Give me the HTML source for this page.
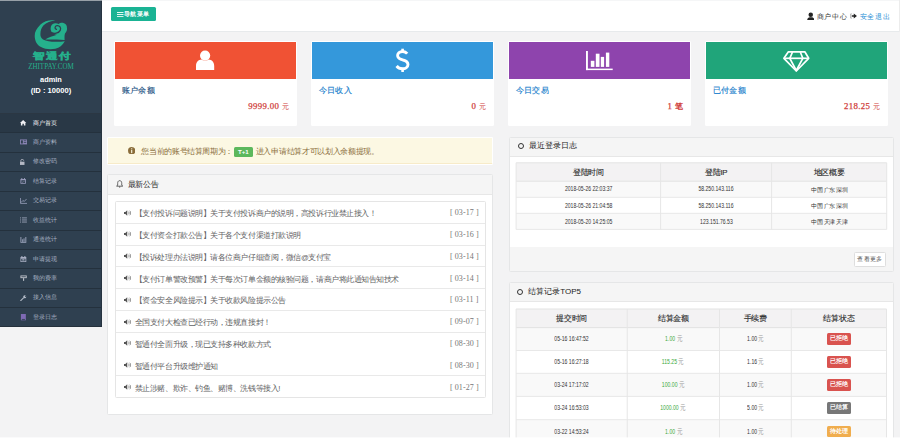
<!DOCTYPE html><html><head><meta charset="utf-8"><style>
*{margin:0;padding:0;box-sizing:border-box}
html,body{width:900px;height:438px;overflow:hidden;background:#f3f3f4;font-family:"Liberation Sans",sans-serif;color:#676a6c}
.a{position:absolute;white-space:nowrap}
.menu{left:0;width:101px;border-top:1px solid #24313d;font-size:5.9px}
.card{width:183px;height:85px;background:#fff;border-radius:1.5px;top:40.75px}
.band{position:absolute;left:1px;top:1px;right:1px;height:37px}
.tt{position:absolute;left:8.2px;top:45.7px;font-size:8px;letter-spacing:0.2px;line-height:10px;font-weight:500;-webkit-text-stroke:0.15px currentColor}
.amt{position:absolute;right:8px;top:60px;font-family:"Liberation Serif",serif;font-size:8.8px;letter-spacing:0.35px;line-height:10px;color:#d0403b;-webkit-text-stroke:0.25px #d0403b}
.amt i{font-style:normal;font-weight:normal;font-size:7.4px;letter-spacing:0;-webkit-text-stroke:0}
.panel{background:#fff;border:1px solid #e5e6e7;border-radius:1.5px;overflow:hidden}
.ph{position:absolute;left:0;top:0;width:100%;background:#f5f5f5;border-bottom:1px solid #e7e7e7}
.nx{display:inline-block;transform:scaleX(0.8);transform-origin:50% 50%}
.ptitle{color:#222;line-height:10px;font-weight:500}
</style></head><body>
<div class="a" style="left:0;top:0;width:102px;height:327px;background:#2f4050;border-right:1px solid #263340;border-bottom:1px solid #25313c">
<svg class="a" style="left:0;top:0" width="102" height="100" viewBox="0 0 102 100">
<path fill="#25b08c" d="M55.3,20.5 C50,19.6 44,21 40.5,24.5 C36.5,28.5 34.6,32 34.7,36 C34.8,41 37,45 41,47 C45,49.2 50,49.6 55.3,48.8 C59.5,48 62.5,45 64.8,41.2 C61.5,41.8 58.5,41.9 55.3,41.8 C51,41.8 46,41.2 43,39.5 C41,38 40.3,36 40.4,34 C40.5,30 41.6,27.2 43.6,25.2 C46.2,22.6 51,21 55.3,20.5 Z"/>
<path fill="#25b08c" d="M50.6,28.6 C50.6,25.5 52.5,23.5 55,23.3 C56.5,23.2 57.8,23.5 58.6,24 C59.8,22.8 61.8,22.4 63.5,22.9 C65.8,23.6 67.2,25.4 66.9,27.6 C67.4,29.5 66.8,31.8 65,33.5 C64.3,35.5 64.6,38 64.6,40.1 C58,39.6 51,39.5 45.2,39.6 C48.5,37.5 53,35.8 57,34.8 C53,34.5 50.6,32 50.6,28.6 Z"/>
<path fill="none" stroke="#2f4050" stroke-width="1.3" stroke-linecap="round" d="M51.5,32.6 C54,34 58.6,33.6 60.2,30.4 C61.4,27.8 59.6,25.3 57,25.6 C54.8,25.9 54.3,28.6 56.4,29.4"/>
</svg>
<div class="a" style="left:0;width:102px;text-align:center;top:49.5px;font-size:11px;line-height:13px;font-weight:bold;color:#25b08c;letter-spacing:2px;text-indent:2px;-webkit-text-stroke:0.6px #25b08c;transform:scaleY(0.78)">智通付</div>
<div class="a" style="left:0;width:102px;text-align:center;top:62.8px;font-family:'Liberation Serif',serif;font-size:8.2px;line-height:7px;color:#25b08c;transform:scaleX(0.86)">ZHITPAY.COM</div>
<div class="a" style="left:0;width:102px;text-align:center;top:75.5px;font-size:7.4px;line-height:8px;font-weight:bold;color:#fff">admin</div>
<div class="a" style="left:0;width:102px;text-align:center;top:86.5px;font-size:7.6px;line-height:8px;font-weight:bold;color:#fff">(ID : 10000)</div>
<div class="a menu" style="top:113.10px;height:19.10px;background:#293846;border-top-color:#2b3743;color:#ffffff">
<svg class="a" style="left:20.3px;top:6px;color:#f0f0f4" width="7.2" height="6.3" viewBox="0 0 8 7" fill="#f0f0f4"><path d="M0,3.2 L3.5,0 L7,3.2 L6,3.2 L6,6 L4.3,6 L4.3,4.2 L2.7,4.2 L2.7,6 L1,6 L1,3.2 Z"/></svg>
<div class="a" style="left:33px;top:5.5px;line-height:7px">商户首页</div>
</div>
<div class="a menu" style="top:132.20px;height:19.47px;color:#a7b1c2">
<svg class="a" style="left:20.3px;top:6px;color:#8a84b4" width="7.2" height="6.3" viewBox="0 0 8 7" fill="#8a84b4"><rect x="0" y="0.5" width="8" height="5.5"/><rect x="1" y="1.5" width="2.2" height="3.5" fill="#2f4050"/><rect x="4.2" y="1.6" width="2.8" height="0.8" fill="#2f4050"/><rect x="4.2" y="3.4" width="2.8" height="0.8" fill="#2f4050"/></svg>
<div class="a" style="left:33px;top:5.5px;line-height:7px">商户资料</div>
</div>
<div class="a menu" style="top:151.67px;height:19.47px;color:#a7b1c2">
<svg class="a" style="left:20.3px;top:6px;color:#b4b8c4" width="7.2" height="6.3" viewBox="0 0 8 7" fill="#b4b8c4"><rect x="0" y="3" width="5" height="3.6"/><path d="M1,3 L1,1.6 C1,0 4,0 4,1.6 L4,2" fill="none" stroke-width="1" stroke="currentColor"/></svg>
<div class="a" style="left:33px;top:5.5px;line-height:7px">修改密码</div>
</div>
<div class="a menu" style="top:171.14px;height:19.47px;color:#a7b1c2">
<svg class="a" style="left:20.3px;top:6px;color:#9a9cbc" width="7.2" height="6.3" viewBox="0 0 8 7" fill="#9a9cbc"><path d="M0.5,1 L6.5,1 L6.5,6.5 L0.5,6.5 Z M1.5,2.6 L1.5,5.6 L5.5,5.6 L5.5,2.6 Z"/><rect x="1.5" y="0" width="1" height="1.6"/><rect x="4.5" y="0" width="1" height="1.6"/><path d="M2.3,4.2 L3.3,5 L4.8,3.3" fill="none" stroke="currentColor" stroke-width="0.6"/></svg>
<div class="a" style="left:33px;top:5.5px;line-height:7px">结算记录</div>
</div>
<div class="a menu" style="top:190.61px;height:19.47px;color:#a7b1c2">
<svg class="a" style="left:20.3px;top:6px;color:#9aa0bc" width="7.2" height="6.3" viewBox="0 0 8 7" fill="#9aa0bc"><path d="M0.5,0 L0.5,6 L8,6" fill="none" stroke="currentColor" stroke-width="0.9"/><path d="M1.2,5 L3.2,2.8 L4.8,3.8 L7.4,1" fill="none" stroke="currentColor" stroke-width="0.9"/></svg>
<div class="a" style="left:33px;top:5.5px;line-height:7px">交易记录</div>
</div>
<div class="a menu" style="top:210.08px;height:19.47px;color:#a7b1c2">
<svg class="a" style="left:20.3px;top:6px;color:#9aa2b8" width="7.2" height="6.3" viewBox="0 0 8 7" fill="#9aa2b8"><rect x="0" y="0.5" width="1.2" height="1"/><rect x="0" y="2.8" width="1.2" height="1"/><rect x="0" y="5.1" width="1.2" height="1"/><rect x="2.2" y="0.5" width="5.5" height="1"/><rect x="2.2" y="2.8" width="5.5" height="1"/><rect x="2.2" y="5.1" width="5.5" height="1"/></svg>
<div class="a" style="left:33px;top:5.5px;line-height:7px">收益统计</div>
</div>
<div class="a menu" style="top:229.55px;height:19.47px;color:#a7b1c2">
<svg class="a" style="left:20.3px;top:6px;color:#a0a8c0" width="7.2" height="6.3" viewBox="0 0 8 7" fill="#a0a8c0"><path d="M0.5,0 L0.5,6.5 L7,6.5 L7,0 L6,0 L6,5.5 L1.5,5.5 L1.5,0 Z"/><rect x="2.5" y="2.5" width="1" height="3"/><rect x="4" y="1.5" width="1" height="4"/></svg>
<div class="a" style="left:33px;top:5.5px;line-height:7px">通道统计</div>
</div>
<div class="a menu" style="top:249.02px;height:19.47px;color:#a7b1c2">
<svg class="a" style="left:20.3px;top:6px;color:#aab0c4" width="7.2" height="6.3" viewBox="0 0 8 7" fill="#aab0c4"><path d="M0.5,1.2 L7,1.2 L7,6.6 L0.5,6.6 Z M1.4,3 L1.4,5.7 L6.1,5.7 L6.1,3 Z"/><rect x="1.5" y="0" width="1.2" height="2"/><rect x="4.8" y="0" width="1.2" height="2"/><rect x="2.5" y="3.6" width="2.5" height="1.4"/></svg>
<div class="a" style="left:33px;top:5.5px;line-height:7px">申请提现</div>
</div>
<div class="a menu" style="top:268.49px;height:19.47px;color:#a7b1c2">
<svg class="a" style="left:20.3px;top:6px;color:#c0c4cc" width="7.2" height="6.3" viewBox="0 0 8 7" fill="#c0c4cc"><rect x="0.5" y="0.5" width="7" height="3"/><rect x="3.4" y="3.5" width="1.2" height="3"/><rect x="1.5" y="1.5" width="5" height="1" fill="#2f4050"/></svg>
<div class="a" style="left:33px;top:5.5px;line-height:7px">我的费率</div>
</div>
<div class="a menu" style="top:287.96px;height:19.47px;color:#a7b1c2">
<svg class="a" style="left:20.3px;top:6px;color:#b4bcc8" width="7.2" height="6.3" viewBox="0 0 8 7" fill="#b4bcc8"><path d="M0.5,6.6 L4.2,2.9" fill="none" stroke="currentColor" stroke-width="1.2"/><circle cx="5.3" cy="1.9" r="1.7"/><rect x="5.2" y="0" width="1.3" height="1.6" fill="#2f4050" transform="rotate(45 5.3 1.9)"/></svg>
<div class="a" style="left:33px;top:5.5px;line-height:7px">接入信息</div>
</div>
<div class="a menu" style="top:307.43px;height:19.57px;color:#a7b1c2">
<svg class="a" style="left:20.3px;top:6px;color:#7e6ab4" width="7.2" height="6.3" viewBox="0 0 8 7" fill="#7e6ab4"><rect x="1" y="0" width="5.5" height="7"/><rect x="2" y="5.5" width="3.5" height="1" fill="#2f4050"/></svg>
<div class="a" style="left:33px;top:5.5px;line-height:7px">登录日志</div>
</div>
</div>
<div class="a" style="left:102px;top:0;width:798px;height:32px;background:#fff;border-bottom:1px solid #e7eaec"></div>
<div class="a" style="left:0;top:0;width:900px;height:1px;background:rgba(236,238,240,0.55);z-index:9"></div>
<div class="a" style="left:111.2px;top:6.9px;width:44.8px;height:14.1px;background:#1ab394;border-radius:1.5px"></div>
<svg class="a" style="left:117px;top:11.8px" width="6.5" height="5.2" viewBox="0 0 6.5 5.2" fill="#fff"><rect x="0" y="0" width="6.5" height="0.9"/><rect x="0" y="2.1" width="6.5" height="0.9"/><rect x="0" y="4.2" width="6.5" height="0.9"/></svg>
<div class="a" style="left:124.2px;top:9.8px;font-size:6.3px;letter-spacing:0.300px;line-height:8px;color:#fff;font-weight:bold">导航菜单</div>
<svg class="a" style="left:806.5px;top:11.5px" width="7.5" height="8.5" viewBox="0 0 8 9"><circle cx="4" cy="2.8" r="2.4" fill="#222"/><path d="M0.2,8.4 C0.4,6.4 1.6,5.6 3,5.5 L5,5.5 C6.4,5.6 7.6,6.4 7.8,8.4 Z" fill="#222"/></svg>
<div class="a" style="left:816.8px;top:12.7px;font-size:7px;letter-spacing:0.600px;line-height:8px;color:#333;font-weight:500">商户中心</div>
<svg class="a" style="left:850.3px;top:12px" width="7.5" height="8" viewBox="0 0 8 8"><path d="M2.2,1.8 L0.6,1.8 L0.6,6.2 L2.2,6.2" fill="none" stroke="#999" stroke-width="0.7"/><path d="M1.8,3.1 L4,3.1 L4,1.4 L7.4,4 L4,6.6 L4,4.9 L1.8,4.9 Z" fill="#222"/></svg>
<div class="a" style="left:859.5px;top:12.7px;font-size:7px;letter-spacing:0.800px;line-height:8px;color:#2b8fd6;font-weight:500">安全退出</div>
<div class="a card" style="left:113.90px"><div class="band" style="background:#f05234"></div>
<div class="tt" style="color:#1b5283">账户余额</div><div class="amt">9999.00 <i>元</i></div></div>
<div class="a card" style="left:310.90px"><div class="band" style="background:#3498db"></div>
<div class="tt" style="color:#1a80cc">今日收入</div><div class="amt">0 <i>元</i></div></div>
<div class="a card" style="left:507.90px"><div class="band" style="background:#8e44ad"></div>
<div class="tt" style="color:#1a80cc">今日交易</div><div class="amt">1 <i style="font-weight:bold;font-size:8px">笔</i></div></div>
<div class="a card" style="left:704.90px"><div class="band" style="background:#20a57a"></div>
<div class="tt" style="color:#1a80cc">已付金额</div><div class="amt">218.25 <i>元</i></div></div>
<svg class="a" style="left:0;top:0;z-index:2" width="900" height="100" viewBox="0 0 900 100">
<circle cx="205.1" cy="55.6" r="5.1" fill="#fff"/>
<path fill="#fff" d="M196,70.1 L196,66 C196,62.2 198.5,59.8 201.5,59.6 C203,61 207.2,61 208.7,59.6 C211.7,59.8 214.2,62.2 214.2,66 L214.2,70.1 Z"/>
<path fill="none" stroke="#fff" stroke-width="2.9" d="M407.2,53.6 C405.5,51.5 402.5,51.3 400.5,51.9 C398,52.7 397.3,55 397.8,56.7 C398.5,59 401.5,59.6 403,60 C405.5,60.6 408,61.6 408,64.6 C408,67.5 405,69 402.3,68.8 C399.8,68.7 397.8,67.5 396.6,66"/>
<rect x="401.3" y="48.7" width="2.6" height="4" fill="#fff"/>
<rect x="401.3" y="67.8" width="2.6" height="4.2" fill="#fff"/>
<rect x="586" y="51" width="1.9" height="19.1" fill="#fff"/>
<rect x="586" y="68.6" width="26.7" height="1.5" fill="#fff"/>
<rect x="590.8" y="60.8" width="3.6" height="6.1" fill="#fff"/>
<rect x="595.8" y="53.7" width="3.7" height="13.2" fill="#fff"/>
<rect x="600.8" y="56.9" width="3.3" height="10" fill="#fff"/>
<rect x="605.9" y="52.6" width="3.4" height="14.3" fill="#fff"/>
<g fill="none" stroke="#fff" stroke-width="1.7" stroke-linejoin="round">
<path d="M788.4,51.8 L804.8,51.8 L808.7,58.3 L796.3,71 L783.9,58.3 Z"/>
<path d="M784.2,58.3 L808.4,58.3"/>
<path d="M792.5,52 L789.8,58.3 L796.3,70.5 L802.8,58.3 L800.3,52"/>
</g>
</svg>
<div class="a" style="left:107px;top:136.5px;width:386.2px;height:27.4px;background:#fcf8e3;border:1px solid #fff;border-bottom-color:#f7ebc9;box-shadow:0 1px 0 #fff;border-radius:1.5px"></div>
<svg class="a" style="left:128px;top:146.7px" width="7.4" height="7.4" viewBox="0 0 8 8"><circle cx="4" cy="4" r="4" fill="#8a6d3b"/><rect x="3.4" y="1.4" width="1.2" height="1.1" fill="#fcf8e3"/><rect x="3.4" y="3.2" width="1.2" height="3.4" fill="#fcf8e3"/></svg>
<div class="a" style="left:141.3px;top:146.5px;font-size:7.6px;letter-spacing:-0.350px;line-height:9px;color:#8a6d3b">您当前的账号结算周期为：</div>
<div class="a" style="left:233.9px;top:146.9px;width:18.9px;height:9.8px;background:#5cb85c;border-radius:1.5px;color:#fff;font-size:6.2px;line-height:9.8px;text-align:center;font-weight:bold">T+1</div>
<div class="a" style="left:255.8px;top:146.5px;font-size:7.6px;letter-spacing:-0.310px;line-height:9px;color:#8a6d3b">进入申请结算才可以划入余额提现。</div>
<div class="a panel" style="left:107px;top:174.4px;width:386.2px;height:240.6px"><div class="ph" style="height:19.2px"></div></div>
<svg class="a" style="left:115.8px;top:180.4px" width="7.4" height="7.6" viewBox="0 0 8 8"><path d="M4,0.6 C5.8,0.6 6.2,2.2 6.2,3.6 L6.2,5.4 L7.4,6.6 L0.6,6.6 L1.8,5.4 L1.8,3.6 C1.8,2.2 2.2,0.6 4,0.6 Z" fill="none" stroke="#333" stroke-width="0.8"/><circle cx="4" cy="7.4" r="0.6" fill="#333"/></svg>
<div class="a ptitle" style="left:127.6px;top:179.5px;font-size:8px;letter-spacing:-0.100px">最新公告</div>
<div class="a" style="left:115px;top:201.0px;width:370.9px;height:196.69px;border:1px solid #e5e5e5;border-radius:1.5px;background:#fff"></div>
<svg class="a" style="left:123.6px;top:209.60px" width="7.6" height="6" viewBox="0 0 8 6"><path d="M0,2 L1.4,2 L3.4,0.2 L3.4,5.8 L1.4,4 L0,4 Z" fill="#555"/><path d="M4.6,1.6 C5.6,2.3 5.6,3.7 4.6,4.4 M5.8,0.6 C7.6,1.8 7.6,4.2 5.8,5.4" fill="none" stroke="#555" stroke-width="0.7"/></svg>
<div class="a" style="left:134.8px;top:209.20px;font-size:7.7px;letter-spacing:-0.450px;line-height:9px;color:#5f6264;font-weight:500">【支付投诉问题说明】关于支付投诉商户的说明，高投诉行业禁止接入！</div>
<div class="a" style="left:449.9px;top:208.10px;font-family:Liberation Serif,serif;font-size:8px;letter-spacing:0.1px;line-height:9px;color:#777">[ 03-17 ]</div>
<div class="a" style="left:115.5px;top:222.81px;width:369.5px;height:1px;background:#e9e9e9"></div>
<svg class="a" style="left:123.6px;top:231.41px" width="7.6" height="6" viewBox="0 0 8 6"><path d="M0,2 L1.4,2 L3.4,0.2 L3.4,5.8 L1.4,4 L0,4 Z" fill="#555"/><path d="M4.6,1.6 C5.6,2.3 5.6,3.7 4.6,4.4 M5.8,0.6 C7.6,1.8 7.6,4.2 5.8,5.4" fill="none" stroke="#555" stroke-width="0.7"/></svg>
<div class="a" style="left:134.8px;top:231.01px;font-size:7.7px;letter-spacing:-0.450px;line-height:9px;color:#5f6264;font-weight:500">【支付资金打款公告】关于各个支付渠道打款说明</div>
<div class="a" style="left:449.9px;top:229.91px;font-family:Liberation Serif,serif;font-size:8px;letter-spacing:0.1px;line-height:9px;color:#777">[ 03-16 ]</div>
<div class="a" style="left:115.5px;top:244.62px;width:369.5px;height:1px;background:#e9e9e9"></div>
<svg class="a" style="left:123.6px;top:253.22px" width="7.6" height="6" viewBox="0 0 8 6"><path d="M0,2 L1.4,2 L3.4,0.2 L3.4,5.8 L1.4,4 L0,4 Z" fill="#555"/><path d="M4.6,1.6 C5.6,2.3 5.6,3.7 4.6,4.4 M5.8,0.6 C7.6,1.8 7.6,4.2 5.8,5.4" fill="none" stroke="#555" stroke-width="0.7"/></svg>
<div class="a" style="left:134.8px;top:252.82px;font-size:7.7px;letter-spacing:-0.450px;line-height:9px;color:#5f6264;font-weight:500">【投诉处理办法说明】请各位商户仔细查阅，微信@支付宝</div>
<div class="a" style="left:449.9px;top:251.72px;font-family:Liberation Serif,serif;font-size:8px;letter-spacing:0.1px;line-height:9px;color:#777">[ 03-14 ]</div>
<div class="a" style="left:115.5px;top:266.43px;width:369.5px;height:1px;background:#e9e9e9"></div>
<svg class="a" style="left:123.6px;top:275.03px" width="7.6" height="6" viewBox="0 0 8 6"><path d="M0,2 L1.4,2 L3.4,0.2 L3.4,5.8 L1.4,4 L0,4 Z" fill="#555"/><path d="M4.6,1.6 C5.6,2.3 5.6,3.7 4.6,4.4 M5.8,0.6 C7.6,1.8 7.6,4.2 5.8,5.4" fill="none" stroke="#555" stroke-width="0.7"/></svg>
<div class="a" style="left:134.8px;top:274.63px;font-size:7.7px;letter-spacing:-0.450px;line-height:9px;color:#5f6264;font-weight:500">【支付订单警改预警】关于每次订单金额的核验问题，请商户将此通知告知技术</div>
<div class="a" style="left:449.9px;top:273.53px;font-family:Liberation Serif,serif;font-size:8px;letter-spacing:0.1px;line-height:9px;color:#777">[ 03-14 ]</div>
<div class="a" style="left:115.5px;top:288.24px;width:369.5px;height:1px;background:#e9e9e9"></div>
<svg class="a" style="left:123.6px;top:296.84px" width="7.6" height="6" viewBox="0 0 8 6"><path d="M0,2 L1.4,2 L3.4,0.2 L3.4,5.8 L1.4,4 L0,4 Z" fill="#555"/><path d="M4.6,1.6 C5.6,2.3 5.6,3.7 4.6,4.4 M5.8,0.6 C7.6,1.8 7.6,4.2 5.8,5.4" fill="none" stroke="#555" stroke-width="0.7"/></svg>
<div class="a" style="left:134.8px;top:296.44px;font-size:7.7px;letter-spacing:-0.450px;line-height:9px;color:#5f6264;font-weight:500">【资金安全风险提示】关于收款风险提示公告</div>
<div class="a" style="left:449.9px;top:295.34px;font-family:Liberation Serif,serif;font-size:8px;letter-spacing:0.1px;line-height:9px;color:#777">[ 03-11 ]</div>
<div class="a" style="left:115.5px;top:310.05px;width:369.5px;height:1px;background:#e9e9e9"></div>
<svg class="a" style="left:123.6px;top:318.65px" width="7.6" height="6" viewBox="0 0 8 6"><path d="M0,2 L1.4,2 L3.4,0.2 L3.4,5.8 L1.4,4 L0,4 Z" fill="#555"/><path d="M4.6,1.6 C5.6,2.3 5.6,3.7 4.6,4.4 M5.8,0.6 C7.6,1.8 7.6,4.2 5.8,5.4" fill="none" stroke="#555" stroke-width="0.7"/></svg>
<div class="a" style="left:134.8px;top:318.25px;font-size:7.7px;letter-spacing:-0.450px;line-height:9px;color:#5f6264;font-weight:500">全国支付大检查已经行动，违规直接封！</div>
<div class="a" style="left:449.9px;top:317.15px;font-family:Liberation Serif,serif;font-size:8px;letter-spacing:0.1px;line-height:9px;color:#777">[ 09-07 ]</div>
<div class="a" style="left:115.5px;top:331.86px;width:369.5px;height:1px;background:#e9e9e9"></div>
<svg class="a" style="left:123.6px;top:340.46px" width="7.6" height="6" viewBox="0 0 8 6"><path d="M0,2 L1.4,2 L3.4,0.2 L3.4,5.8 L1.4,4 L0,4 Z" fill="#555"/><path d="M4.6,1.6 C5.6,2.3 5.6,3.7 4.6,4.4 M5.8,0.6 C7.6,1.8 7.6,4.2 5.8,5.4" fill="none" stroke="#555" stroke-width="0.7"/></svg>
<div class="a" style="left:134.8px;top:340.06px;font-size:7.7px;letter-spacing:-0.450px;line-height:9px;color:#5f6264;font-weight:500">智通付全面升级，现已支持多种收款方式</div>
<div class="a" style="left:449.9px;top:338.96px;font-family:Liberation Serif,serif;font-size:8px;letter-spacing:0.1px;line-height:9px;color:#777">[ 08-30 ]</div>
<svg class="a" style="left:123.6px;top:362.27px" width="7.6" height="6" viewBox="0 0 8 6"><path d="M0,2 L1.4,2 L3.4,0.2 L3.4,5.8 L1.4,4 L0,4 Z" fill="#555"/><path d="M4.6,1.6 C5.6,2.3 5.6,3.7 4.6,4.4 M5.8,0.6 C7.6,1.8 7.6,4.2 5.8,5.4" fill="none" stroke="#555" stroke-width="0.7"/></svg>
<div class="a" style="left:134.8px;top:361.87px;font-size:7.7px;letter-spacing:-0.450px;line-height:9px;color:#5f6264;font-weight:500">智通付平台升级维护通知</div>
<div class="a" style="left:449.9px;top:360.77px;font-family:Liberation Serif,serif;font-size:8px;letter-spacing:0.1px;line-height:9px;color:#777">[ 08-30 ]</div>
<div class="a" style="left:115.5px;top:375.48px;width:369.5px;height:1px;background:#e9e9e9"></div>
<svg class="a" style="left:123.6px;top:384.08px" width="7.6" height="6" viewBox="0 0 8 6"><path d="M0,2 L1.4,2 L3.4,0.2 L3.4,5.8 L1.4,4 L0,4 Z" fill="#555"/><path d="M4.6,1.6 C5.6,2.3 5.6,3.7 4.6,4.4 M5.8,0.6 C7.6,1.8 7.6,4.2 5.8,5.4" fill="none" stroke="#555" stroke-width="0.7"/></svg>
<div class="a" style="left:134.8px;top:383.68px;font-size:7.7px;letter-spacing:-0.450px;line-height:9px;color:#5f6264;font-weight:500">禁止涉赌、欺诈、钓鱼、赌博、洗钱等接入!</div>
<div class="a" style="left:449.9px;top:382.58px;font-family:Liberation Serif,serif;font-size:8px;letter-spacing:0.1px;line-height:9px;color:#777">[ 01-27 ]</div>
<div class="a panel" style="left:509px;top:136.5px;width:385.2px;height:135.1px"><div class="ph" style="height:19px"></div><div class="a" style="left:0;top:109.6px;width:100%;height:25.5px;background:#f5f5f5"></div></div>
<div class="a" style="left:517.7px;top:143.2px;width:6.1px;height:6.1px;border-radius:50%;border:1.2px solid #333"></div>
<div class="a ptitle" style="left:529px;top:141px;font-size:8px;letter-spacing:0.000px">最近登录日志</div>
<div class="a" style="left:853.6px;top:252.4px;width:32.9px;height:14.2px;background:#fff;border:1px solid #dedede;border-radius:1.5px;font-size:6.4px;letter-spacing:0.300px;line-height:12.2px;text-align:center;color:#555">查看更多</div>
<div class="a" style="left:516.1px;top:162.8px;width:370.60px;height:18.40px;background:#f3f2f3"></div>
<div class="a" style="left:516.1px;top:181.20px;width:370.60px;height:16.10px;background:#f9f9f9"></div>
<div class="a" style="left:516.1px;top:197.30px;width:370.60px;height:16.00px;background:#fff"></div>
<div class="a" style="left:516.1px;top:213.30px;width:370.60px;height:16.10px;background:#f9f9f9"></div>
<svg class="a" style="left:0;top:0" width="900" height="438" viewBox="0 0 900 438"><rect x="516.10" y="162.30" width="370.60" height="1" fill="#e3e3e3"/><rect x="516.10" y="180.70" width="370.60" height="1" fill="#e3e3e3"/><rect x="516.10" y="196.80" width="370.60" height="1" fill="#e8e8e8"/><rect x="516.10" y="212.80" width="370.60" height="1" fill="#e8e8e8"/><rect x="516.10" y="228.90" width="370.60" height="1" fill="#e8e8e8"/><rect x="515.60" y="162.80" width="1" height="66.60" fill="#e6e6e6"/><rect x="660.10" y="162.80" width="1" height="66.60" fill="#e6e6e6"/><rect x="771.10" y="162.80" width="1" height="66.60" fill="#e6e6e6"/><rect x="886.20" y="162.80" width="1" height="66.60" fill="#e6e6e6"/></svg>
<div class="a" style="left:516.10px;width:144.50px;text-align:center;top:167.50px;font-size:7.8px;letter-spacing:-0.200px;line-height:9px;color:#2a2a2a;font-weight:500;-webkit-text-stroke:0.12px #2a2a2a">登陆时间</div>
<div class="a" style="left:660.60px;width:111.00px;text-align:center;top:167.50px;font-size:7.8px;letter-spacing:-0.200px;line-height:9px;color:#2a2a2a;font-weight:500;-webkit-text-stroke:0.12px #2a2a2a">登陆IP</div>
<div class="a" style="left:771.60px;width:115.10px;text-align:center;top:167.50px;font-size:7.8px;letter-spacing:-0.200px;line-height:9px;color:#2a2a2a;font-weight:500;-webkit-text-stroke:0.12px #2a2a2a">地区概要</div>
<div class="a" style="left:516.10px;width:144.50px;text-align:center;top:185.45px;font-size:6.4px;line-height:7px;color:#333"><span class="nx">2018-05-26 22:03:37</span></div>
<div class="a" style="left:660.60px;width:111.00px;text-align:center;top:185.45px;font-size:6.4px;line-height:7px;color:#333"><span class="nx">58.250.143.116</span></div>
<div class="a" style="left:771.60px;width:115.10px;text-align:center;top:185.75px;font-size:5.3px;line-height:7px;color:#333"><span style="font-size:6.2px;letter-spacing:-0.4px">中国 广东 深圳</span></div>
<div class="a" style="left:516.10px;width:144.50px;text-align:center;top:201.50px;font-size:6.4px;line-height:7px;color:#333"><span class="nx">2018-05-26 21:04:58</span></div>
<div class="a" style="left:660.60px;width:111.00px;text-align:center;top:201.50px;font-size:6.4px;line-height:7px;color:#333"><span class="nx">58.250.143.116</span></div>
<div class="a" style="left:771.60px;width:115.10px;text-align:center;top:201.80px;font-size:5.3px;line-height:7px;color:#333"><span style="font-size:6.2px;letter-spacing:-0.4px">中国 广东 深圳</span></div>
<div class="a" style="left:516.10px;width:144.50px;text-align:center;top:217.55px;font-size:6.4px;line-height:7px;color:#333"><span class="nx">2018-05-20 14:25:05</span></div>
<div class="a" style="left:660.60px;width:111.00px;text-align:center;top:217.55px;font-size:6.4px;line-height:7px;color:#333"><span class="nx">123.151.76.53</span></div>
<div class="a" style="left:771.60px;width:115.10px;text-align:center;top:217.85px;font-size:5.3px;line-height:7px;color:#333"><span style="font-size:6.2px;letter-spacing:-0.4px">中国 天津 天津</span></div>
<div class="a panel" style="left:509px;top:282px;width:385.2px;height:170px"><div class="ph" style="height:19.2px"></div></div>
<div class="a" style="left:517.2px;top:288.6px;width:6.1px;height:6.1px;border-radius:50%;border:1.2px solid #333"></div>
<div class="a ptitle" style="left:528.3px;top:286.5px;font-size:8px;letter-spacing:0.000px">结算记录TOP5</div>
<div class="a" style="left:516.1px;top:309.0px;width:370.40px;height:18.60px;background:#f3f2f3"></div>
<div class="a" style="left:516.1px;top:327.60px;width:370.40px;height:22.90px;background:#f9f9f9"></div>
<div class="a" style="left:516.1px;top:350.50px;width:370.40px;height:22.80px;background:#fff"></div>
<div class="a" style="left:516.1px;top:373.30px;width:370.40px;height:23.10px;background:#f9f9f9"></div>
<div class="a" style="left:516.1px;top:396.40px;width:370.40px;height:23.30px;background:#fff"></div>
<div class="a" style="left:516.1px;top:419.70px;width:370.40px;height:23.20px;background:#f9f9f9"></div>
<svg class="a" style="left:0;top:0" width="900" height="438" viewBox="0 0 900 438"><rect x="516.10" y="308.50" width="370.40" height="1" fill="#e3e3e3"/><rect x="516.10" y="327.10" width="370.40" height="1" fill="#e3e3e3"/><rect x="516.10" y="350.00" width="370.40" height="1" fill="#e8e8e8"/><rect x="516.10" y="372.80" width="370.40" height="1" fill="#e8e8e8"/><rect x="516.10" y="395.90" width="370.40" height="1" fill="#e8e8e8"/><rect x="516.10" y="419.20" width="370.40" height="1" fill="#e8e8e8"/><rect x="516.10" y="442.40" width="370.40" height="1" fill="#e8e8e8"/><rect x="515.60" y="309.00" width="1" height="133.90" fill="#e6e6e6"/><rect x="626.70" y="309.00" width="1" height="133.90" fill="#e6e6e6"/><rect x="719.00" y="309.00" width="1" height="133.90" fill="#e6e6e6"/><rect x="790.80" y="309.00" width="1" height="133.90" fill="#e6e6e6"/><rect x="886.00" y="309.00" width="1" height="133.90" fill="#e6e6e6"/></svg>
<div class="a" style="left:516.10px;width:111.10px;text-align:center;top:313.80px;font-size:7.8px;letter-spacing:-0.200px;line-height:9px;color:#2a2a2a;font-weight:500;-webkit-text-stroke:0.12px #2a2a2a">提交时间</div>
<div class="a" style="left:627.20px;width:92.30px;text-align:center;top:313.80px;font-size:7.8px;letter-spacing:-0.200px;line-height:9px;color:#2a2a2a;font-weight:500;-webkit-text-stroke:0.12px #2a2a2a">结算金额</div>
<div class="a" style="left:719.50px;width:71.80px;text-align:center;top:313.80px;font-size:7.8px;letter-spacing:-0.200px;line-height:9px;color:#2a2a2a;font-weight:500;-webkit-text-stroke:0.12px #2a2a2a">手续费</div>
<div class="a" style="left:791.30px;width:95.20px;text-align:center;top:313.80px;font-size:7.8px;letter-spacing:-0.200px;line-height:9px;color:#2a2a2a;font-weight:500;-webkit-text-stroke:0.12px #2a2a2a">结算状态</div>
<div class="a" style="left:516.10px;width:111.10px;text-align:center;top:335.25px;font-size:6.4px;line-height:7px;color:#333"><span class="nx">05-16 16:47:52</span></div>
<div class="a" style="left:627.20px;width:92.30px;text-align:center;top:335.25px;font-size:6.4px;line-height:7px;color:#999"><span class="nx"><span style="color:#3ca93c">1.00</span> <span style="font-size:7px">元</span></span></div>
<div class="a" style="left:719.50px;width:71.80px;text-align:center;top:335.25px;font-size:6.4px;line-height:7px;color:#333"><span class="nx">1.00 <span style="color:#999;font-size:7px">元</span></span></div>
<div class="a" style="left:826.6px;top:333.35px;width:24.5px;height:11.4px;background:#d9534f;border-radius:1.5px;color:#fff;font-size:5.6px;line-height:11.4px;text-align:center;font-weight:bold">已拒绝</div>
<div class="a" style="left:516.10px;width:111.10px;text-align:center;top:358.10px;font-size:6.4px;line-height:7px;color:#333"><span class="nx">05-16 16:27:18</span></div>
<div class="a" style="left:627.20px;width:92.30px;text-align:center;top:358.10px;font-size:6.4px;line-height:7px;color:#999"><span class="nx"><span style="color:#3ca93c">115.25</span> <span style="font-size:7px">元</span></span></div>
<div class="a" style="left:719.50px;width:71.80px;text-align:center;top:358.10px;font-size:6.4px;line-height:7px;color:#333"><span class="nx">1.16 <span style="color:#999;font-size:7px">元</span></span></div>
<div class="a" style="left:826.6px;top:356.20px;width:24.5px;height:11.4px;background:#d9534f;border-radius:1.5px;color:#fff;font-size:5.6px;line-height:11.4px;text-align:center;font-weight:bold">已拒绝</div>
<div class="a" style="left:516.10px;width:111.10px;text-align:center;top:381.05px;font-size:6.4px;line-height:7px;color:#333"><span class="nx">03-24 17:17:02</span></div>
<div class="a" style="left:627.20px;width:92.30px;text-align:center;top:381.05px;font-size:6.4px;line-height:7px;color:#999"><span class="nx"><span style="color:#3ca93c">100.00</span> <span style="font-size:7px">元</span></span></div>
<div class="a" style="left:719.50px;width:71.80px;text-align:center;top:381.05px;font-size:6.4px;line-height:7px;color:#333"><span class="nx">1.00 <span style="color:#999;font-size:7px">元</span></span></div>
<div class="a" style="left:826.6px;top:379.15px;width:24.5px;height:11.4px;background:#d9534f;border-radius:1.5px;color:#fff;font-size:5.6px;line-height:11.4px;text-align:center;font-weight:bold">已拒绝</div>
<div class="a" style="left:516.10px;width:111.10px;text-align:center;top:404.25px;font-size:6.4px;line-height:7px;color:#333"><span class="nx">03-24 16:53:03</span></div>
<div class="a" style="left:627.20px;width:92.30px;text-align:center;top:404.25px;font-size:6.4px;line-height:7px;color:#999"><span class="nx"><span style="color:#3ca93c">1000.00</span> <span style="font-size:7px">元</span></span></div>
<div class="a" style="left:719.50px;width:71.80px;text-align:center;top:404.25px;font-size:6.4px;line-height:7px;color:#333"><span class="nx">5.00 <span style="color:#999;font-size:7px">元</span></span></div>
<div class="a" style="left:826.6px;top:402.35px;width:24.5px;height:11.4px;background:#777;border-radius:1.5px;color:#fff;font-size:5.6px;line-height:11.4px;text-align:center;font-weight:bold">已结算</div>
<div class="a" style="left:516.10px;width:111.10px;text-align:center;top:427.50px;font-size:6.4px;line-height:7px;color:#333"><span class="nx">03-22 14:53:24</span></div>
<div class="a" style="left:627.20px;width:92.30px;text-align:center;top:427.50px;font-size:6.4px;line-height:7px;color:#999"><span class="nx"><span style="color:#3ca93c">1.00</span> <span style="font-size:7px">元</span></span></div>
<div class="a" style="left:719.50px;width:71.80px;text-align:center;top:427.50px;font-size:6.4px;line-height:7px;color:#333"><span class="nx">1.00 <span style="color:#999;font-size:7px">元</span></span></div>
<div class="a" style="left:826.6px;top:425.60px;width:24.5px;height:11.4px;background:#f0ad4e;border-radius:1.5px;color:#fff;font-size:5.6px;line-height:11.4px;text-align:center;font-weight:bold">待处理</div>
<div class="a" style="left:899px;top:0;width:1px;height:32px;background:#ececec;z-index:9"></div>
<div class="a" style="left:0;top:437px;width:900px;height:1px;background:rgba(255,255,255,0.6);z-index:9"></div>
</body></html>
